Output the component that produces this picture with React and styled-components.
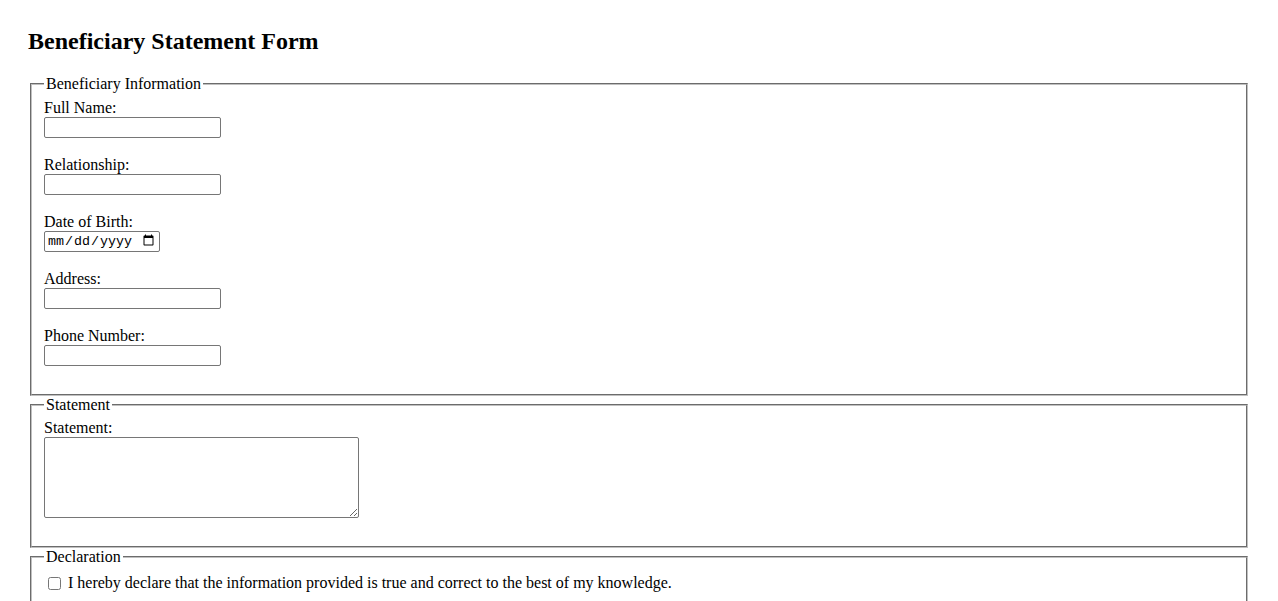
import React from 'react';
import styled, { createGlobalStyle } from 'styled-components';

const GlobalStyle = createGlobalStyle`
  body {
    margin: 0;
    background: #fff;
    color: #000;
    font-family: "Liberation Serif", "Times New Roman", serif;
    font-size: 16px;
  }
`;

const Page = styled.div`
  padding: 27px 28px 0;
`;

const Title = styled.h2`
  margin: 0 0 20px;
  font-size: 24px;
  line-height: 28px;
  font-weight: bold;
`;

const Section = styled.fieldset`
  margin: 0 2px;
  padding: 0.35em 0.75em 0.625em;
  border: 2px groove rgb(192, 192, 192);
  min-width: min-content;
`;

const Legend = styled.legend`
  padding: 0 2px;
  line-height: normal;
`;

const Field = styled.div`
  margin-bottom: 18px;
`;

const Label = styled.label`
  display: block;
  line-height: 18px;
`;

const TextInput = styled.input`
  display: block;
  box-sizing: border-box;
  width: ${p => (p.type === 'date' ? '116px' : '177px')};
  height: 21px;
  margin: 0;
  padding: 1px 2px;
  border: 1px solid #767676;
  border-radius: 2px;
  font-family: ${p => (p.type === 'date' ? '"Liberation Mono", monospace' : '"Liberation Sans", Arial, sans-serif')};
  font-size: 13.33px;
`;

const TextArea = styled.textarea`
  display: block;
  box-sizing: border-box;
  width: 315px;
  height: 81px;
  margin: 0;
  border: 1px solid #767676;
  border-radius: 2px;
  font-family: "Liberation Mono", monospace;
  font-size: 13.33px;
`;

const CheckRow = styled.label`
  display: flex;
  align-items: flex-start;
  line-height: 18px;
  padding-top: 2px;
`;

const Check = styled.input`
  width: 13px;
  height: 13px;
  margin: 3px 7px 3px 4px;
`;

const fields = [
  { id: 'fullName', label: 'Full Name:', type: 'text' },
  { id: 'relationship', label: 'Relationship:', type: 'text' },
  { id: 'dob', label: 'Date of Birth:', type: 'date' },
  { id: 'address', label: 'Address:', type: 'text' },
  { id: 'phone', label: 'Phone Number:', type: 'tel' },
];

export default function App() {
  return (
    <Page>
      <GlobalStyle />
      <Title>Beneficiary Statement Form</Title>
      <form onSubmit={e => e.preventDefault()}>
        <Section>
          <Legend>Beneficiary Information</Legend>
          {fields.map(f => (
            <Field key={f.id}>
              <Label htmlFor={f.id}>{f.label}</Label>
              <TextInput id={f.id} type={f.type} />
            </Field>
          ))}
        </Section>

        <Section>
          <Legend>Statement</Legend>
          <Field>
            <Label htmlFor="statement">Statement:</Label>
            <TextArea id="statement" />
          </Field>
        </Section>

        <Section>
          <Legend>Declaration</Legend>
          <CheckRow>
            <Check type="checkbox" />
            I hereby declare that the information provided is true and correct to the best of my knowledge.
          </CheckRow>
        </Section>
      </form>
    </Page>
  );
}
